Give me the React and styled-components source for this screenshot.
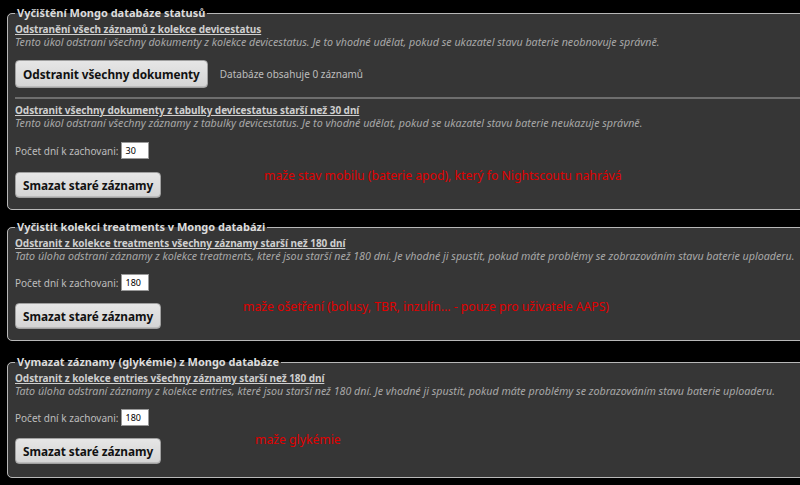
import React from "react";
import styled, { createGlobalStyle } from "styled-components";

const Global = createGlobalStyle`
  html, body { margin: 0; padding: 0; background: #000; overflow: hidden; }
  body { font-family: "Noto Sans", "Open Sans", sans-serif; color: #ccc; }
  * { box-sizing: border-box; }
`;

const Page = styled.div`
  padding: 5px 0 0 7px;
  width: 830px;
`;

const Box = styled.fieldset`
  margin: 0 0 ${(p) => p.$gap || 10}px 0;
  padding: 1px 7px ${(p) => p.$pb || 11}px;
  border: 1px solid #b8b8b8;
  border-radius: 5px;
  background: #363636;
  min-width: 0;
`;

const Legend = styled.legend`
  padding: 0 2px;
  font-size: 11px;
  line-height: 16px;
  font-weight: bold;
  color: #dcdcdc;
`;

const Section = styled.div`
  padding: ${(p) => (p.$divided ? "4px 0 0" : "0")};
  border-top: ${(p) => (p.$divided ? "2px solid #6e6e6e" : "none")};
  margin-bottom: ${(p) => p.$mb || 0}px;
`;

const Title = styled.div`
  font-size: 10px;
  line-height: 14px;
  font-weight: bold;
  letter-spacing: -0.05px;
  text-decoration: underline;
  color: #cfcfcf;
`;

const Desc = styled.div`
  font-size: 10.7px;
  line-height: 13px;
  font-style: italic;
  color: #a8a8a8;
`;

const Row = styled.div`
  display: flex;
  align-items: ${(p) => p.$align || "center"};
  margin-top: ${(p) => p.$mt || 0}px;
`;

const Label = styled.span`
  font-size: 10px;
  color: #bdbdbd;
  margin-right: 3px;
`;

const Input = styled.input`
  width: 28px;
  height: 17px;
  border: 1px solid #999;
  background: #fff;
  font-size: 9px;
  padding: 0 3px;
  font-family: "Noto Sans", sans-serif;
  color: #000;
`;

const Button = styled.button`
  height: ${(p) => p.$h || 26}px;
  padding: 0 7px;
  border: 1px solid #a0a0a0;
  border-radius: 4px;
  background: linear-gradient(#e6e6e6, #d4d4d4);
  box-shadow: inset 0 -1px 0 #bbb;
  font-family: inherit;
  font-size: 11.8px;
  font-weight: bold;
  letter-spacing: -0.05px;
  color: #111;
`;

const Info = styled.span`
  margin-left: 12px;
  font-size: 10px;
  color: #bdbdbd;
`;

const Note = styled.span`
  margin-left: ${(p) => p.$ml}px;
  margin-top: ${(p) => p.$mt || 0}px;
  font-size: 12.2px;
  line-height: 16px;
  color: #e00000;
`;

const DaysRow = ({ value, mt = 12 }) => (
  <Row $mt={mt}>
    <Label>Počet dní k zachovani:</Label>
    <Input defaultValue={value} />
  </Row>
);

export default function App() {
  return (
    <>
      <Global />
      <Page>
        <Box $gap={9} $pb={11}>
          <Legend>Vyčištění Mongo databáze statusů</Legend>
          <Section $mb={9}>
            <Title>Odstranění všech záznamů z kolekce devicestatus</Title>
            <Desc>
              Tento úkol odstraní všechny dokumenty z kolekce devicestatus. Je to vhodné udělat, pokud se ukazatel stavu baterie neobnovuje správně.
            </Desc>
            <Row $mt={11}>
              <Button $h={28}>Odstranit všechny dokumenty</Button>
              <Info>Databáze obsahuje 0 záznamů</Info>
            </Row>
          </Section>
          <Section $divided>
            <Title>Odstranit všechny dokumenty z tabulky devicestatus starší než 30 dní</Title>
            <Desc>
              Tento úkol odstraní všechny záznamy z tabulky devicestatus. Je to vhodné udělat, pokud se ukazatel stavu baterie neukazuje správně.
            </Desc>
            <DaysRow value="30" />
            <Row $mt={13} $align="flex-start">
              <Button>Smazat staré záznamy</Button>
              <Note $ml={103} $mt={-4}>maže stav mobilu (baterie apod), který fo Nightscoutu nahrává</Note>
            </Row>
          </Section>
        </Box>

        <Box $gap={13} $pb={11}>
          <Legend>Vyčistit kolekci treatments v Mongo databázi</Legend>
          <Section>
            <Title>Odstranit z kolekce treatments všechny záznamy starší než 180 dní</Title>
            <Desc>
              Tato úloha odstraní záznamy z kolekce treatments, které jsou starší než 180 dní. Je vhodné ji spustit, pokud máte problémy se zobrazováním stavu baterie uploaderu.
            </Desc>
            <DaysRow value="180" mt={11} />
            <Row $mt={12} $align="flex-start">
              <Button>Smazat staré záznamy</Button>
              <Note $ml={82} $mt={-4}>maže ošetření (bolusy, TBR, inzulín... - pouze pro uživatele AAPS)</Note>
            </Row>
          </Section>
        </Box>

        <Box $pb={13}>
          <Legend>Vymazat záznamy (glykémie) z Mongo databáze</Legend>
          <Section>
            <Title>Odstranit z kolekce entries všechny záznamy starší než 180 dní</Title>
            <Desc>
              Tato úloha odstraní záznamy z kolekce entries, které jsou starší než 180 dní. Je vhodné ji spustit, pokud máte problémy se zobrazováním stavu baterie uploaderu.
            </Desc>
            <DaysRow value="180" mt={11} />
            <Row $mt={12} $align="flex-start">
              <Button>Smazat staré záznamy</Button>
              <Note $ml={94} $mt={-6}>maže glykémie</Note>
            </Row>
          </Section>
        </Box>
      </Page>
    </>
  );
}
